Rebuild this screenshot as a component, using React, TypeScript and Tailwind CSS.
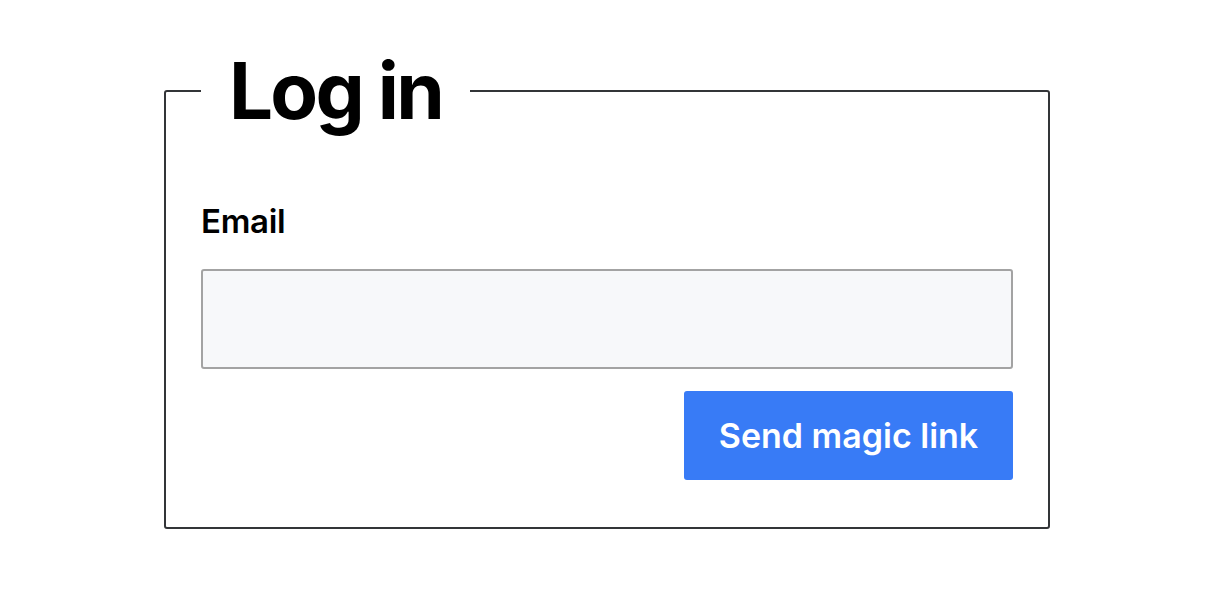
export default function App() {
  return (
    <div className="min-h-[594px] w-full bg-white pt-[42px]" style={{ fontFamily: "Inter, 'Noto Sans', sans-serif" }}>
      <fieldset className="ml-[164px] w-[886px] rounded-[3px] border-2 border-[#333538] px-[35px] pb-[47px]">
        <legend className="px-[28px] text-[78px] font-bold leading-[97px] tracking-[-0.035em] text-black">Log in</legend>
        <div className="flex flex-col">
          <label className="mt-[62px] text-[33px] font-semibold leading-[40px] tracking-[-0.01em] text-black">Email</label>
          <input
            type="email"
            className="mt-[28px] h-[100px] w-full rounded-[3px] border-2 border-[#a3a3a3] bg-[#f7f8fa] outline-none"
          />
          <div className="mt-[22px] flex justify-end">
            <button className="h-[89px] w-[329px] rounded-[3px] bg-[#387bf6] text-[34px] font-semibold text-white">
              Send magic link
            </button>
          </div>
        </div>
      </fieldset>
    </div>
  );
}
